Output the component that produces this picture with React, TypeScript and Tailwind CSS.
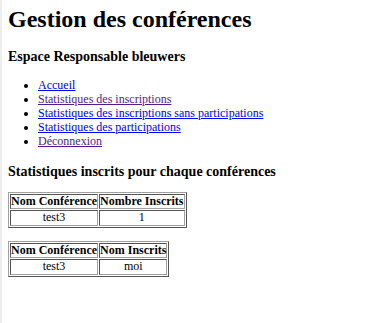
import React from 'react';

const links = [
  { label: 'Accueil', visited: false },
  { label: 'Statistiques des inscriptions', visited: true },
  { label: 'Statistiques des inscriptions sans participations', visited: false },
  { label: 'Statistiques des participations', visited: false },
  { label: 'Déconnexion', visited: true },
];

const tableClass =
  'border-separate border-spacing-[1px] border border-t-[#a0a0a0] border-l-[#a0a0a0] border-r-[#555555] border-b-[#555555]';
const cellClass =
  'border border-t-[#555555] border-l-[#555555] border-r-[#a0a0a0] border-b-[#a0a0a0] p-0 leading-[13.6px] text-center';

function StatTable({ cols, row }: { cols: string[]; row: string[] }) {
  return (
    <table className={tableClass}>
      <thead>
        <tr>
          {cols.map((c) => (
            <th key={c} className={`${cellClass} font-bold`}>
              {c}
            </th>
          ))}
        </tr>
      </thead>
      <tbody>
        <tr>
          {row.map((v, i) => (
            <td key={i} className={cellClass}>
              {v}
            </td>
          ))}
        </tr>
      </tbody>
    </table>
  );
}

export default function App() {
  return (
    <div className="flex min-h-[323px] bg-white text-black font-['Liberation_Serif',serif] text-[12px] leading-[normal]">
      <div className="w-[2px] shrink-0 bg-[#eeeeee]" />
      <div className="pl-[6px] pt-[6px]">
        <h1 className="text-[24px] font-bold mb-[16px]">Gestion des conférences</h1>
        <h3 className="text-[14px] font-bold mb-[14px]">Espace Responsable bleuwers</h3>
        <ul className="list-disc pl-[30px] mb-[15px]">
          {links.map((l) => (
            <li key={l.label} className="leading-[13.9px]">
              <a href="#" className={`underline ${l.visited ? 'text-[#551a8b]' : 'text-[#0000ee]'}`}>
                {l.label}
              </a>
            </li>
          ))}
        </ul>
        <h3 className="text-[14px] font-bold mb-[12px]">Statistiques inscrits pour chaque conférences</h3>
        <StatTable cols={['Nom Conférence', 'Nombre Inscrits']} row={['test3', '1']} />
        <div className="h-[13px]" />
        <StatTable cols={['Nom Conférence', 'Nom Inscrits']} row={['test3', 'moi']} />
      </div>
    </div>
  );
}
